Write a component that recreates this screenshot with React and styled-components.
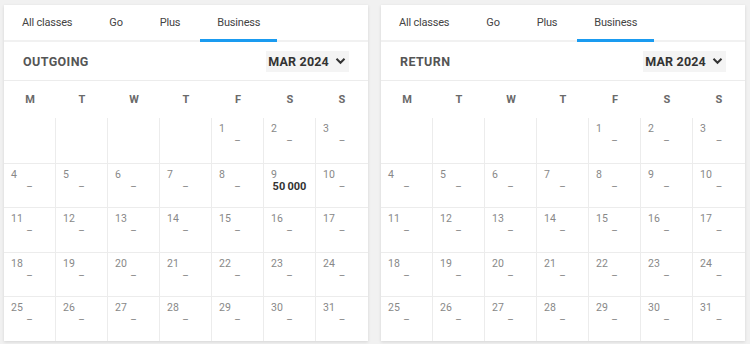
import React from "react";
import styled, { createGlobalStyle } from "styled-components";

const GlobalStyle = createGlobalStyle`
  html, body {
    margin: 0;
    padding: 0;
    background: #f1f1f1;
    font-family: Roboto, "Noto Sans", sans-serif;
  }
`;

const tabs = ["All classes", "Go", "Plus", "Business"];
const weekdays = ["M", "T", "W", "T", "F", "S", "S"];
// March 2024 starts on a Friday
const leading = 4;
const prices = { 9: "50\u2009000" };

const Chevron = () => (
  <svg width="11" height="8" viewBox="0 0 11 8">
    <path d="M1.5 1.8 L5.5 5.8 L9.5 1.8" fill="none" stroke="#333" strokeWidth="2" />
  </svg>
);

const Calendar = ({ title, showPrices }) => {
  const cells = [];
  for (let i = 0; i < leading; i++) cells.push(null);
  for (let d = 1; d <= 31; d++) cells.push(d);

  return (
    <Card>
      <Tabs>
        {tabs.map((t, i) => (
          <Tab key={t} $active={i === 3}>
            {t}
          </Tab>
        ))}
      </Tabs>
      <Header>
        <Title>{title}</Title>
        <MonthSelect>
          MAR 2024 <Chevron />
        </MonthSelect>
      </Header>
      <Weekdays>
        {weekdays.map((w, i) => (
          <Weekday key={i}>{w}</Weekday>
        ))}
      </Weekdays>
      <Grid>
        {cells.map((d, i) => (
          <Cell key={i} $lastCol={i % 7 === 6}>
            {d && (
              <>
                <DayNum>{d}</DayNum>
                {showPrices && prices[d] ? (
                  <Price>{prices[d]}</Price>
                ) : (
                  <Dash>–</Dash>
                )}
              </>
            )}
          </Cell>
        ))}
      </Grid>
    </Card>
  );
};

export default function App() {
  return (
    <>
      <GlobalStyle />
      <Page>
        <Calendar title="OUTGOING" showPrices />
        <Calendar title="RETURN" />
      </Page>
    </>
  );
}

// ---------------------------- styled-components ----------------------
const Page = styled.div`
  display: grid;
  grid-template-columns: 364px 364px;
  gap: 13px;
  padding: 5px 4px 3px 4px;
`;

const Card = styled.div`
  background: #fff;
  box-shadow: 0 1px 3px rgba(0, 0, 0, 0.12);
  height: 336px;
  display: flex;
  flex-direction: column;
`;

const Tabs = styled.div`
  display: flex;
  gap: 3px;
  height: 35px;
  padding-left: 1px;
  border-bottom: 2px solid #f1f1f1;
`;

const Tab = styled.div`
  padding: 0 17px;
  display: flex;
  align-items: center;
  font-size: 11px;
  letter-spacing: -0.2px;
  color: #444;
  border-bottom: 3px solid ${(p) => (p.$active ? "#1a9bf0" : "transparent")};
  margin-bottom: -2px;
  padding-top: 1px;
`;

const Header = styled.div`
  height: 38px;
  display: flex;
  align-items: center;
  justify-content: space-between;
  padding: 0 19px 0 19px;
  border-bottom: 1px solid #ececec;
`;

const Title = styled.div`
  font-size: 12.5px;
  font-weight: 700;
  color: #555;
  letter-spacing: 0.4px;
`;

const MonthSelect = styled.div`
  display: flex;
  align-items: center;
  gap: 6px;
  background: #f4f4f4;
  padding: 3px 3px 3px 2px;
  font-size: 12.5px;
  font-weight: 700;
  color: #333;
  letter-spacing: 0.2px;
`;

const Weekdays = styled.div`
  display: grid;
  grid-template-columns: repeat(7, 1fr);
  height: 37px;
  align-items: center;
`;

const Weekday = styled.div`
  text-align: center;
  font-size: 11px;
  font-weight: 700;
  color: #6a6a6a;
`;

const Grid = styled.div`
  flex: 1;
  display: grid;
  grid-template-columns: repeat(7, 1fr);
  grid-template-rows: repeat(5, 1fr);
`;

const Cell = styled.div`
  border-right: ${(p) => (p.$lastCol ? "none" : "1px solid #ececec")};
  border-top: 1px solid #ececec;
  padding: 4px 0 0 7px;
  display: flex;
  flex-direction: column;
  &:nth-child(-n + 7) {
    border-top: none;
  }
`;

const DayNum = styled.div`
  font-size: 10.5px;
  line-height: 13px;
  color: #888;
`;

const Dash = styled.div`
  font-size: 10px;
  line-height: 11px;
  color: #888;
  text-align: center;
  padding-right: 7px;
`;

const Price = styled.div`
  font-size: 11px;
  line-height: 12px;
  font-weight: 700;
  color: #333;
  text-align: center;
  padding-right: 7px;
`;
